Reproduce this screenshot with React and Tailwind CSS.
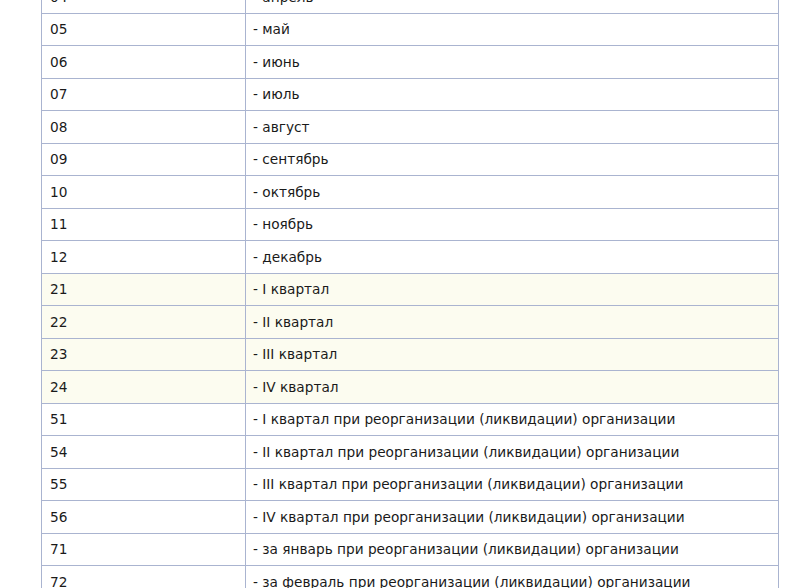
const rows = [
  ["04", "- апрель"], ["05", "- май"], ["06", "- июнь"], ["07", "- июль"], ["08", "- август"],
  ["09", "- сентябрь"], ["10", "- октябрь"], ["11", "- ноябрь"], ["12", "- декабрь"],
  ["21", "- I квартал", 1], ["22", "- II квартал", 1], ["23", "- III квартал", 1], ["24", "- IV квартал", 1],
  ["51", "- I квартал при реорганизации (ликвидации) организации"],
  ["54", "- II квартал при реорганизации (ликвидации) организации"],
  ["55", "- III квартал при реорганизации (ликвидации) организации"],
  ["56", "- IV квартал при реорганизации (ликвидации) организации"],
  ["71", "- за январь при реорганизации (ликвидации) организации"],
  ["72", "- за февраль при реорганизации (ликвидации) организации"],
];

export default function App() {
  return (
    <div className="h-[588px] overflow-hidden bg-white" style={{ fontFamily: '"DejaVu Sans", Verdana, sans-serif' }}>
      <div className="ml-[41px] w-[738px] -mt-[19px] border-l border-r border-[#aab4d0] text-[13.7px] text-[#1a1a1a]">
        {rows.map(([code, label, hl]) => (
          <div key={code} className={`grid grid-cols-[204px_1fr] h-[32.5px] border-b border-[#aab4d0] ${hl ? "bg-[#fcfcf0]" : ""}`}>
            <div className="flex items-center pl-[8px] pt-[1px] border-r border-[#aab4d0]">{code}</div>
            <div className="flex items-center pl-[7px] pt-[1px]">{label}</div>
          </div>
        ))}
      </div>
    </div>
  );
}
